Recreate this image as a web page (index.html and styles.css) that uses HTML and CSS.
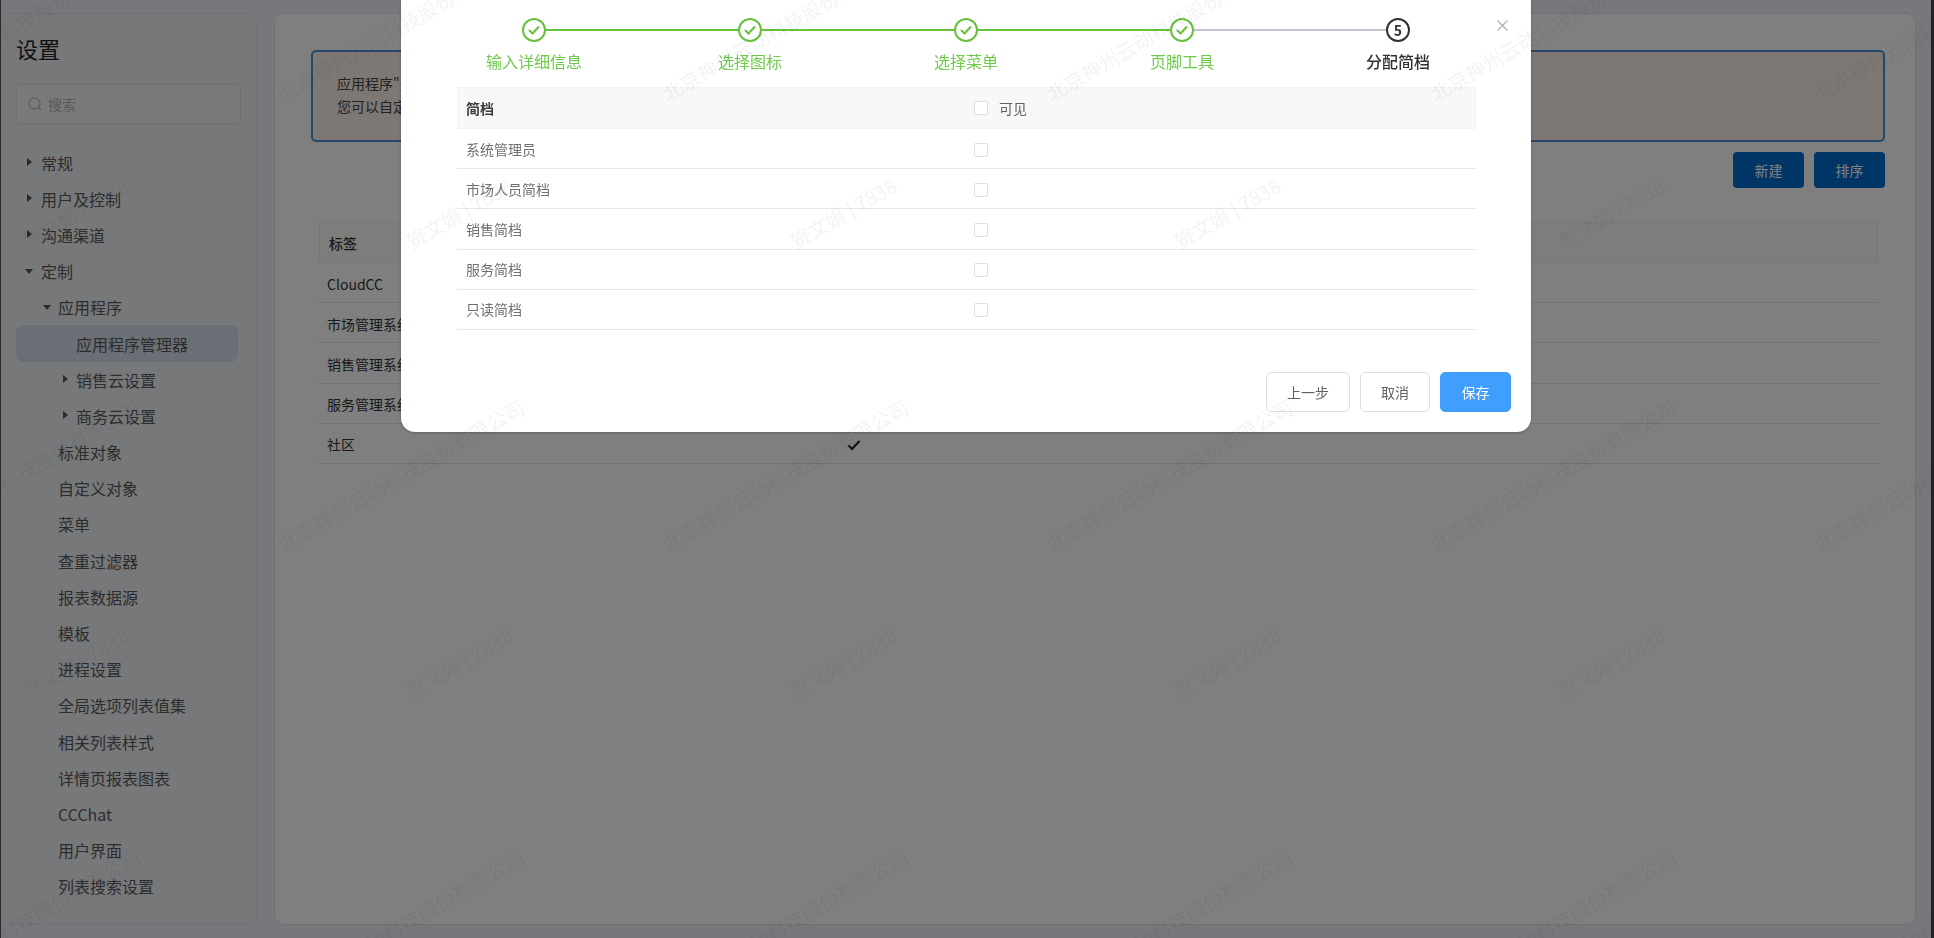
FILE: index.html
```html
<!DOCTYPE html>
<html lang="zh-CN">
<head>
<meta charset="utf-8">
<title>设置</title>
<link rel="stylesheet" href="styles.css">
</head>
<body>
<div class="app">
  <aside class="side">
    <h1 class="side-title">设置</h1>
    <div class="search">
      <svg class="search-icon" width="14" height="14" viewBox="0 0 14 14"><circle cx="6.5" cy="6.5" r="5.5"/><path d="M10.5 10.5 13 13"/></svg>
      <span>搜索</span>
    </div>
    <ul class="tree">
      <li class="row"><i class="arrow"></i>常规</li>
      <li class="row"><i class="arrow"></i>用户及控制</li>
      <li class="row"><i class="arrow"></i>沟通渠道</li>
      <li class="row"><i class="arrow down"></i>定制</li>
      <li class="row l1"><i class="arrow down"></i>应用程序</li>
      <li class="row l2 active">应用程序管理器</li>
      <li class="row l2"><i class="arrow"></i>销售云设置</li>
      <li class="row l2"><i class="arrow"></i>商务云设置</li>
      <li class="row l1">标准对象</li>
      <li class="row l1">自定义对象</li>
      <li class="row l1">菜单</li>
      <li class="row l1">查重过滤器</li>
      <li class="row l1">报表数据源</li>
      <li class="row l1">模板</li>
      <li class="row l1">进程设置</li>
      <li class="row l1">全局选项列表值集</li>
      <li class="row l1">相关列表样式</li>
      <li class="row l1">详情页报表图表</li>
      <li class="row l1">CCChat</li>
      <li class="row l1">用户界面</li>
      <li class="row l1">列表搜索设置</li>
    </ul>
  </aside>
  <main class="main">
    <div class="notice">
      <p>应用程序"是一组对象</p>
      <p>您可以自定义应用程序</p>
    </div>
    <div class="actions">
      <button class="btn-dark">新建</button>
      <button class="btn-dark">排序</button>
    </div>
    <div class="list">
      <div class="list-head">标签</div>
      <div class="list-row">CloudCC</div>
      <div class="list-row">市场管理系统</div>
      <div class="list-row">销售管理系统</div>
      <div class="list-row">服务管理系统</div>
      <div class="list-row">社区
        <svg class="tick" width="14" height="12" viewBox="0 0 14 12"><path d="M1.5 6.5 5 10l7.5-8"/></svg>
      </div>
    </div>
  </main>
</div>

<div class="mask"></div>

<section class="modal">
  <button class="close" aria-label="关闭">
    <svg width="11" height="11" viewBox="0 0 11 11"><path d="M.5.5l10 10M10.5.5l-10 10"/></svg>
  </button>
  <div class="steps">
    <div class="step done">
      <div class="step-head"><span class="seg blank"></span><span class="dot"><svg width="14" height="12" viewBox="0 0 14 12"><path d="M2 6l3.5 3.5L12 2.5"/></svg></span><span class="seg"></span></div>
      <div class="step-label">输入详细信息</div>
    </div>
    <div class="step done">
      <div class="step-head"><span class="seg"></span><span class="dot"><svg width="14" height="12" viewBox="0 0 14 12"><path d="M2 6l3.5 3.5L12 2.5"/></svg></span><span class="seg"></span></div>
      <div class="step-label">选择图标</div>
    </div>
    <div class="step done">
      <div class="step-head"><span class="seg"></span><span class="dot"><svg width="14" height="12" viewBox="0 0 14 12"><path d="M2 6l3.5 3.5L12 2.5"/></svg></span><span class="seg"></span></div>
      <div class="step-label">选择菜单</div>
    </div>
    <div class="step done">
      <div class="step-head"><span class="seg"></span><span class="dot"><svg width="14" height="12" viewBox="0 0 14 12"><path d="M2 6l3.5 3.5L12 2.5"/></svg></span><span class="seg grey"></span></div>
      <div class="step-label">页脚工具</div>
    </div>
    <div class="step current">
      <div class="step-head"><span class="seg grey"></span><span class="dot">5</span><span class="seg blank"></span></div>
      <div class="step-label">分配简档</div>
    </div>
  </div>

  <div class="profiles">
    <div class="p-head"><span class="p-name">简档</span><span class="p-check"><i class="box"></i>可见</span></div>
    <div class="p-row"><span class="p-name">系统管理员</span><span class="p-check"><i class="box"></i></span></div>
    <div class="p-row"><span class="p-name">市场人员简档</span><span class="p-check"><i class="box"></i></span></div>
    <div class="p-row"><span class="p-name">销售简档</span><span class="p-check"><i class="box"></i></span></div>
    <div class="p-row"><span class="p-name">服务简档</span><span class="p-check"><i class="box"></i></span></div>
    <div class="p-row"><span class="p-name">只读简档</span><span class="p-check"><i class="box"></i></span></div>
  </div>

  <div class="foot">
    <button class="btn btn-prev">上一步</button>
    <button class="btn btn-cancel">取消</button>
    <button class="btn btn-save">保存</button>
  </div>
</section>

<div class="marks">
  <div class="mark-grid">
    <div class="tile"><span class="wm wm-a">北京神州云动科技股份有限公司</span><span class="wm wm-b">贺文娟 | 7838</span></div>
    <div class="tile"><span class="wm wm-a">北京神州云动科技股份有限公司</span><span class="wm wm-b">贺文娟 | 7838</span></div>
    <div class="tile"><span class="wm wm-a">北京神州云动科技股份有限公司</span><span class="wm wm-b">贺文娟 | 7838</span></div>
    <div class="tile"><span class="wm wm-a">北京神州云动科技股份有限公司</span><span class="wm wm-b">贺文娟 | 7838</span></div>
    <div class="tile"><span class="wm wm-a">北京神州云动科技股份有限公司</span><span class="wm wm-b">贺文娟 | 7838</span></div>
    <div class="tile"><span class="wm wm-a">北京神州云动科技股份有限公司</span><span class="wm wm-b">贺文娟 | 7838</span></div>
    <div class="tile"><span class="wm wm-a">北京神州云动科技股份有限公司</span><span class="wm wm-b">贺文娟 | 7838</span></div>
    <div class="tile"><span class="wm wm-a">北京神州云动科技股份有限公司</span><span class="wm wm-b">贺文娟 | 7838</span></div>
    <div class="tile"><span class="wm wm-a">北京神州云动科技股份有限公司</span><span class="wm wm-b">贺文娟 | 7838</span></div>
    <div class="tile"><span class="wm wm-a">北京神州云动科技股份有限公司</span><span class="wm wm-b">贺文娟 | 7838</span></div>
    <div class="tile"><span class="wm wm-a">北京神州云动科技股份有限公司</span><span class="wm wm-b">贺文娟 | 7838</span></div>
    <div class="tile"><span class="wm wm-a">北京神州云动科技股份有限公司</span><span class="wm wm-b">贺文娟 | 7838</span></div>
    <div class="tile"><span class="wm wm-a">北京神州云动科技股份有限公司</span><span class="wm wm-b">贺文娟 | 7838</span></div>
    <div class="tile"><span class="wm wm-a">北京神州云动科技股份有限公司</span><span class="wm wm-b">贺文娟 | 7838</span></div>
    <div class="tile"><span class="wm wm-a">北京神州云动科技股份有限公司</span><span class="wm wm-b">贺文娟 | 7838</span></div>
    <div class="tile"><span class="wm wm-a">北京神州云动科技股份有限公司</span><span class="wm wm-b">贺文娟 | 7838</span></div>
    <div class="tile"><span class="wm wm-a">北京神州云动科技股份有限公司</span><span class="wm wm-b">贺文娟 | 7838</span></div>
    <div class="tile"><span class="wm wm-a">北京神州云动科技股份有限公司</span><span class="wm wm-b">贺文娟 | 7838</span></div>
  </div>
</div>
</body>
</html>
```

FILE: styles.css
```css
* { box-sizing: border-box; }
html, body { margin: 0; padding: 0; height: 938px; overflow: hidden; }
body {
  font-family: "Noto Sans CJK SC", "Noto Sans", sans-serif;
  font-size: 14px;
  color: #444;
  background: #edf0f6;
}
ul { list-style: none; margin: 0; padding: 0; }
p, h1 { margin: 0; }
button { font: inherit; cursor: pointer; }

.app {
  display: flex;
  gap: 17px;
  width: 1934px;
  height: 938px;
  padding: 13px 15px 13px 0;
  border-left: 1px solid #555;
  border-right: 3px solid #444;
}

/* sidebar */
.side {
  flex: none;
  width: 256px;
  padding: 0 15px;
  background: #eff1f4;
  border: 1px solid #dfe3e9;
  border-left: none;
  border-radius: 10px;
}
.side-title {
  font-size: 22px;
  font-weight: 400;
  line-height: 30px;
  margin-top: 19px;
  color: #222;
}
.search {
  display: flex;
  align-items: center;
  gap: 6px;
  height: 40px;
  margin-top: 21px;
  padding-left: 11px;
  color: #b4b6ba;
  background: #f2f4f6;
  border: 1px solid #dde0e6;
  border-radius: 3px;
}
.search-icon { fill: none; stroke: #b4b6ba; stroke-width: 1.2; }
.tree { margin-top: 20.5px; }
.row {
  position: relative;
  display: flex;
  align-items: center;
  width: 222px;
  height: 36.2px;
  padding-left: 25px;
  font-size: 16px;
  color: #5a5a5a;
  border-radius: 8px;
}
.row.l1 { padding-left: 42px; }
.row.l2 { padding-left: 60px; }
.row.active { background: #d3deeb; }
.arrow {
  position: absolute;
  top: 13px;
  left: 11px;
  width: 0;
  height: 0;
  border-top: 4px solid transparent;
  border-bottom: 4px solid transparent;
  border-left: 5px solid #555;
}
.arrow.down {
  top: 16px;
  left: 9px;
  border-left: 4.5px solid transparent;
  border-right: 4.5px solid transparent;
  border-top: 5px solid #555;
  border-bottom: none;
}
.l1 .arrow { left: 27px; }
.l2 .arrow { left: 47px; }

/* main card */
.main {
  flex: none;
  width: 1642px;
  padding: 36px 30px 0 36px;
  background: #fff;
  border: 1px solid #dfe3e9;
  border-radius: 10px;
}
.notice {
  height: 92px;
  padding: 20px 24px 0;
  line-height: 23px;
  color: #444;
  background: #faf1e9;
  border: 2px solid #4b8fd0;
  border-radius: 5px;
}
.actions {
  display: flex;
  justify-content: flex-end;
  gap: 10px;
  margin-top: 10px;
}
.btn-dark {
  width: 71px;
  height: 36px;
  padding: 0;
  color: #fff;
  background: #006ccc;
  border: none;
  border-radius: 4px;
}
.list { margin: 34px 7px 0 8px; }
.list-head {
  display: flex;
  align-items: center;
  height: 41px;
  padding-left: 9px;
  font-weight: 500;
  color: #333;
  background: #fafaf8;
  border: 1px solid #efefef;
}
.list-row {
  position: relative;
  display: flex;
  align-items: center;
  height: 40.2px;
  padding: 2px 0 0 8px;
  color: #333;
  border-bottom: 1px solid #e4e4e4;
}
.tick {
  position: absolute;
  top: 15px;
  left: 528px;
  fill: none;
  stroke: #222;
  stroke-width: 2;
}

/* overlay */
.mask {
  position: fixed;
  inset: 0;
  background: rgba(0, 0, 0, .5);
}

/* modal */
.modal {
  position: fixed;
  top: 0;
  left: 401px;
  width: 1130px;
  height: 432px;
  padding-top: 18px;
  background: #fff;
  border-radius: 0 0 14px 14px;
  box-shadow: 0 1px 3px rgba(0, 0, 0, .25);
}
.close {
  position: absolute;
  top: 20px;
  left: 1096px;
  display: flex;
  padding: 0;
  background: none;
  border: none;
}
.close svg { stroke: #a9adb5; stroke-width: 1.1; fill: none; }
.steps {
  display: flex;
  width: 1080px;
  margin-left: 25px;
}
.step { flex: 1 1 0; }
.step-head { display: flex; align-items: center; }
.seg { flex: 1; height: 2px; background: #67c23a; }
.seg.grey { background: #c0c4cc; }
.seg.blank { background: transparent; }
.dot {
  display: flex;
  flex: none;
  align-items: center;
  justify-content: center;
  width: 24px;
  height: 24px;
  background: #fff;
  border: 2px solid #67c23a;
  border-radius: 50%;
}
.dot svg { fill: none; stroke: #67c23a; stroke-width: 2; }
.step-label {
  margin-top: 6px;
  font-size: 16px;
  line-height: 26px;
  text-align: center;
  color: #6fcb4a;
}
.current .dot {
  font-size: 14px;
  font-weight: 700;
  color: #303133;
  border-color: #303133;
}
.current .step-label { font-weight: 500; color: #303133; }

.profiles { width: 1019px; margin: 13px 0 0 56px; }
.p-head, .p-row { display: flex; align-items: center; }
.p-head {
  height: 42px;
  font-weight: 700;
  color: #3c3c3c;
  background: #f8f8f7;
  box-shadow: inset 0 0 0 1px #f3f3f2;
}
.p-row {
  height: 40.2px;
  color: #707070;
  border-bottom: 1.5px solid #e8e8ea;
}
.p-name { width: 517px; padding-left: 9px; }
.p-check {
  display: flex;
  align-items: center;
  gap: 11px;
  font-weight: 400;
  color: #606266;
}
.p-row .p-check { padding-top: 2px; }
.box {
  display: block;
  width: 14px;
  height: 14px;
  background: #fff;
  border: 1px solid #dcdfe6;
  border-radius: 2px;
}

.foot {
  display: flex;
  justify-content: flex-end;
  gap: 10px;
  margin-top: 42px;
  padding-right: 20px;
}
.btn {
  height: 40px;
  padding: 0;
  color: #606266;
  background: #fff;
  border: 1px solid #dcdfe6;
  border-radius: 5px;
}
.btn-prev { width: 84px; }
.btn-cancel { width: 70px; }
.btn-save { width: 71px; color: #fff; background: #409eff; border-color: #409eff; }

/* watermark */
.marks {
  position: fixed;
  inset: 0;
  overflow: hidden;
  pointer-events: none;
}
.mark-grid {
  display: grid;
  grid-template-columns: repeat(6, 384px);
  grid-auto-rows: 450px;
  margin: -75px 0 0 -175px;
}
.tile { position: relative; }
.wm {
  position: absolute;
  white-space: nowrap;
  color: rgba(0, 0, 0, .05);
  transform: translate(-50%, -50%) rotate(-30deg);
}
.wm-a { top: 100px; left: 192px; font-size: 20px; }
.wm-b { top: 288px; left: 250px; font-size: 20px; }
```
